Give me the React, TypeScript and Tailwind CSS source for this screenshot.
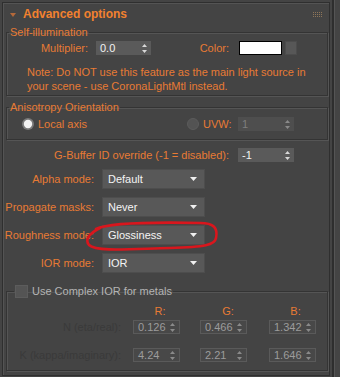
import React from 'react'

const orange = 'text-[#e87b34]'

const Arrows = ({ dim }: { dim?: boolean }) => (
  <svg width="5" height="9" viewBox="0 0 5 9" className="shrink-0">
    <path d="M2.5 0 L5 3 L0 3 Z M0 6 L5 6 L2.5 9 Z" fill={dim ? '#8a8a8a' : '#d8d8d8'} />
  </svg>
)

const Spinner = ({ value, w, dim, muted }: { value: string; w: string; dim?: boolean; muted?: boolean }) => (
  <div
    className={`${w} h-[14px] flex items-center justify-between pl-[4px] pr-[4px] ${
      muted
        ? 'bg-[#484848] border border-[#5a5a5a] text-[#9c9c9c]'
        : dim
          ? 'bg-[#4e4e4e] text-[#7e7e7e]'
          : 'bg-[#5a5a5a] text-[#f2f2f2]'
    }`}
  >
    <span className="leading-none">{value}</span>
    <Arrows dim={dim || muted} />
  </div>
)

const Dropdown = ({ value }: { value: string }) => (
  <div className="w-[103px] h-[20px] ml-[8px] flex items-center justify-between pl-[5px] pr-[7px] bg-[#585858] border border-[#4d4d4d] text-[#f4f4f4]">
    <span>{value}</span>
    <svg width="7" height="4" viewBox="0 0 7 4">
      <path d="M0 0 H7 L3.5 4 Z" fill="#f0f0f0" />
    </svg>
  </div>
)

const groupBox = 'ml-[3px] w-[322px] border border-[#343434] shadow-[inset_1px_1px_0_#555,1px_1px_0_#555]'

const dropRows = [
  { label: 'Alpha mode:', value: 'Default' },
  { label: 'Propagate masks:', value: 'Never' },
  { label: 'Roughness mode:', value: 'Glossiness' },
  { label: 'IOR mode:', value: 'IOR' },
]

export default function App() {
  return (
    <div className="relative w-[340px] h-[377px] bg-[#444444] flex overflow-hidden font-['Liberation_Sans',Arial,sans-serif] text-[11px] leading-[13px]">
      <div className="ml-[2px] mt-[2px] w-[328px] h-[374px] border border-[#2f2f2f] shadow-[inset_1px_1px_0_#545454]">
        {/* rollout header */}
        <div className="h-[23px] flex items-center relative">
          <svg width="6" height="4" viewBox="0 0 6 4" className="ml-[7px]">
            <path d="M0 0 H6 L3 4 Z" fill="#b5693a" />
          </svg>
          <span className="ml-[7px] text-[12px] font-bold text-[#f2812f]">Advanced options</span>
          <svg width="9" height="6" viewBox="0 0 9 6" className="ml-auto mr-[7px]">
            {[0, 2, 4, 6, 8].map((x) =>
              [0, 2, 4].map((y) => <rect key={`${x}-${y}`} x={x} y={y} width="1" height="1" fill="#8e7558" />),
            )}
          </svg>
        </div>

        {/* Self-illumination */}
        <fieldset className={`${groupBox} pb-[2px]`}>
          <legend className={`ml-[2px] px-[1px] ${orange}`}>Self-illumination</legend>
          <div className="flex items-center h-[14px] mt-[2px]">
            <span className={`w-[81px] text-right ${orange}`}>Multiplier:</span>
            <div className="ml-[8px]">
              <Spinner value="0.0" w="w-[55px]" />
            </div>
            <span className={`w-[78px] text-right ${orange}`}>Color:</span>
            <div className="ml-[10px] w-[43px] h-[14px] bg-white border border-black" />
            <div className="ml-[3px] w-[12px] h-[14px] bg-[#575757] border border-[#4c4c4c]" />
          </div>
          <p className={`mt-[10px] pl-[20px] leading-[14px] ${orange}`}>
            Note: Do NOT use this feature as the main light source in
            <br />
            your scene - use CoronaLightMtl instead.
          </p>
        </fieldset>

        {/* Anisotropy */}
        <fieldset className={`${groupBox} mt-[5px] pb-[8px]`}>
          <legend className={`ml-[2px] px-[1px] ${orange}`}>Anisotropy Orientation</legend>
          <div className="flex items-center h-[14px] mt-[3px]">
            <div className="w-[180px] pl-[15px] flex items-center">
              <svg width="12" height="12" viewBox="0 0 12 12">
                <circle cx="6" cy="6" r="6" fill="#7a7a7a" />
                <circle cx="6" cy="6" r="4.2" fill="#f2f2f2" />
              </svg>
              <span className={`ml-[4px] ${orange}`}>Local axis</span>
            </div>
            <svg width="12" height="12" viewBox="0 0 12 12">
              <circle cx="6" cy="6" r="5.5" fill="#535353" stroke="#5c5c5c" />
            </svg>
            <span className={`w-[39px] pl-[4px] ${orange}`}>UVW:</span>
            <Spinner value="1" w="w-[56px]" dim />
          </div>
        </fieldset>

        {/* G-Buffer */}
        <div className="flex items-center h-[14px] mt-[8px]">
          <span className={`w-[226px] text-right ${orange}`}>G-Buffer ID override (-1 = disabled):</span>
          <div className="ml-[9px]">
            <Spinner value="-1" w="w-[56px]" />
          </div>
        </div>

        {/* dropdowns */}
        <div className="mt-[7px] flex flex-col gap-[8px]">
          {dropRows.map((r) => (
            <div key={r.label} className="flex items-center h-[20px]">
              <span className={`w-[91px] text-right ${orange}`}>{r.label}</span>
              <Dropdown value={r.value} />
            </div>
          ))}
        </div>

        {/* Complex IOR */}
        <fieldset className={`${groupBox} mt-[12px] pb-[8px]`}>
          <legend className="ml-[7px] px-[1px] flex items-center">
            <span className="w-[13px] h-[13px] bg-[#545454] border border-[#5c5c5c]" />
            <span className="ml-[4px] text-[#b4b4b4]">Use Complex IOR for metals</span>
          </legend>
          <div className="flex items-center h-[13px] mt-[7px]">
            <span className="w-[114px]" />
            <span className={`ml-[12px] w-[47px] pl-[7px] text-center ${orange}`}>R:</span>
            <span className={`ml-[20px] w-[47px] pl-[9px] text-center ${orange}`}>G:</span>
            <span className={`ml-[22px] w-[47px] pl-[6px] text-center ${orange}`}>B:</span>
          </div>
          <div className="flex items-center h-[14px] mt-[2px]">
            <span className="w-[114px] text-right text-[#3a3a3a]">N (eta/real):</span>
            <div className="ml-[12px]"><Spinner value="0.126" w="w-[47px]" muted /></div>
            <div className="ml-[20px]"><Spinner value="0.466" w="w-[47px]" muted /></div>
            <div className="ml-[22px]"><Spinner value="1.342" w="w-[47px]" muted /></div>
          </div>
          <div className="flex items-center h-[14px] mt-[14px]">
            <span className="w-[114px] text-right text-[#3a3a3a]">K (kappa/imaginary):</span>
            <div className="ml-[12px]"><Spinner value="4.24" w="w-[47px]" muted /></div>
            <div className="ml-[20px]"><Spinner value="2.21" w="w-[47px]" muted /></div>
            <div className="ml-[22px]"><Spinner value="1.646" w="w-[47px]" muted /></div>
          </div>
        </fieldset>
      </div>

      {/* scroll strip */}
      <div className="flex-1 flex">
        <div className="w-[2px]" />
        <div className="w-[2px] bg-[#2e2e2e]" />
        <div className="w-[1px] bg-[#555]" />
      </div>

      {/* red hand-drawn ellipse */}
      <svg className="absolute left-0 top-0 pointer-events-none" width="340" height="377" viewBox="0 0 340 377">
        <path
          d="M96 229 C108 223, 150 222, 200 223 C214 223, 218 228, 216 238 C215 245, 205 247, 170 248 C130 249, 96 252, 89 245 C85 240, 88 234, 100 228"
          fill="none"
          stroke="#d9161d"
          strokeWidth="2.6"
          strokeLinecap="round"
        />
      </svg>
    </div>
  )
}
